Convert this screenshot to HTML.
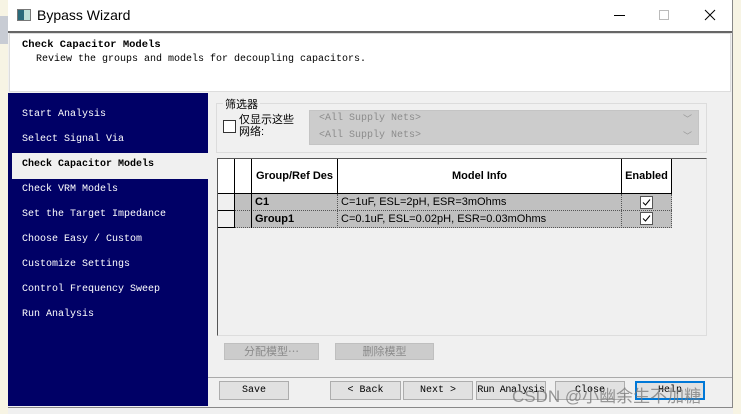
<!DOCTYPE html>
<html><head><style>
*{margin:0;padding:0;box-sizing:border-box}
body{width:741px;height:414px;overflow:hidden;background:#f0f0f0;position:relative;font-family:"Liberation Sans","Noto Sans CJK SC",sans-serif}
.a{position:absolute;white-space:nowrap}
.mono{font-family:"Liberation Mono","Noto Sans CJK SC",monospace;font-size:10px}
.nav div{position:absolute;left:14px;color:#fff;white-space:nowrap}
.btn{position:absolute;border:1px solid #adadad;background:#e1e1e1;text-align:center;font-family:"Liberation Mono",monospace;font-size:10px;line-height:17px;color:#000;white-space:nowrap;overflow:hidden}
.dis{background:#ccc;border-color:#bfbfbf;color:#8a8a8a;font-family:"Noto Sans CJK SC",sans-serif;font-size:11px}
.cell{position:absolute;border-right:1px solid #000;border-bottom:1px solid #000}
</style></head><body>
<div class="a" style="left:0;top:0;width:8px;height:414px;background:#f7f4e4"></div>
<div class="a" style="left:0;top:16px;width:8px;height:28px;background:#c8ccd4"></div>
<div class="a" style="left:733px;top:0;width:8px;height:414px;background:#f7f4e4"></div>
<div class="a" style="left:8px;top:0;width:725px;height:408px;background:#f0f0f0;border-right:1px solid #888;border-bottom:1px solid #888"></div>
<div class="a" style="left:8px;top:0;width:724px;height:31px;background:#fff"></div>
<div class="a" style="left:17px;top:9px;width:14px;height:12px;border:1px solid #777;background:linear-gradient(90deg,#2a6a7a 0 50%,#bfe0d8 50%)"></div>
<div class="a" style="left:37px;top:7px;font-size:14px;color:#000">Bypass Wizard</div>
<div class="a" style="left:614px;top:15px;width:11px;height:1px;background:#000"></div>
<div class="a" style="left:659px;top:10px;width:10px;height:10px;border:1px solid #bbb"></div>
<svg class="a" style="left:704px;top:9px" width="12" height="12"><path d="M1 1L11 11M11 1L1 11" stroke="#000" stroke-width="1"/></svg>
<div class="a" style="left:8px;top:31px;width:724px;height:2px;background:#666"></div>
<div class="a" style="left:9px;top:33px;width:722px;height:59px;background:#fff;border:1px solid #ddd"></div>
<div class="a mono" style="left:22px;top:39px;font-weight:bold;font-size:10.5px">Check Capacitor Models</div>
<div class="a mono" style="left:36px;top:54px;font-size:10px">Review the groups and models for decoupling capacitors.</div>
<div class="a nav mono" style="left:8px;top:93px;width:200px;height:313px;background:#000066">
<div style="top:16px">Start Analysis</div>
<div style="top:41px">Select Signal Via</div>
<div style="left:4px;top:60px;width:196px;height:26px;background:#f0f0f0"></div>
<div style="top:66px;color:#000;font-weight:bold">Check Capacitor Models</div>
<div style="top:91px">Check VRM Models</div>
<div style="top:116px">Set the Target Impedance</div>
<div style="top:141px">Choose Easy / Custom</div>
<div style="top:166px">Customize Settings</div>
<div style="top:191px">Control Frequency Sweep</div>
<div style="top:216px">Run Analysis</div>
</div>
<div class="a" style="left:216px;top:103px;width:491px;height:50px;border:1px solid #dcdcdc"></div>
<div class="a" style="left:223px;top:96px;font-size:11px;background:#f0f0f0;padding:0 2px">筛选器</div>
<div class="a" style="left:223px;top:120px;width:13px;height:13px;border:1px solid #333;background:#fff"></div>
<div class="a" style="left:239px;top:114px;font-size:11px;line-height:12px">仅显示这些<br>网络:</div>
<div class="a" style="left:309px;top:110px;width:390px;height:35px;background:#ccc;border:1px solid #c4c4c4"></div>
<div class="a mono" style="left:319px;top:113px;color:#8c8c8c">&lt;All Supply Nets&gt;</div>
<div class="a mono" style="left:319px;top:130px;color:#8c8c8c">&lt;All Supply Nets&gt;</div>
<div class="a" style="left:683px;top:112px;color:#999;font-size:9px">﹀</div>
<div class="a" style="left:683px;top:129px;color:#999;font-size:9px">﹀</div>
<div class="a" style="left:217px;top:158px;width:490px;height:178px;background:#f0f0f0;border:1px solid #555;border-right-color:#ddd;border-bottom-color:#ddd"></div>
<div class="a" style="left:218px;top:159px;width:453px;height:35px;background:#fff"></div>
<div class="cell" style="left:218px;top:159px;width:17px;height:35px"></div>
<div class="cell" style="left:235px;top:159px;width:17px;height:35px"></div>
<div class="cell" style="left:252px;top:159px;width:86px;height:35px;font-weight:bold;font-size:11px;line-height:34px;padding-left:4px">Group/Ref Des</div>
<div class="cell" style="left:338px;top:159px;width:284px;height:35px;font-weight:bold;font-size:11px;line-height:34px;text-align:center">Model Info</div>
<div class="cell" style="left:622px;top:159px;width:50px;height:35px;font-weight:bold;font-size:11px;line-height:34px;text-align:center">Enabled</div>
<div class="cell" style="left:218px;top:194px;width:17px;height:17px;background:#f0f0f0"></div>
<div class="cell" style="left:218px;top:211px;width:17px;height:17px;background:#f0f0f0"></div>
<div class="a" style="left:235px;top:194px;width:437px;height:34px;background:#c0c0c0;border-bottom:1px dotted #555;border-right:1px dotted #555"></div>
<div class="a" style="left:235px;top:210px;width:437px;height:1px;border-top:1px dotted #555"></div>
<div class="a" style="left:251px;top:194px;width:1px;height:34px;background:#000"></div>
<div class="a" style="left:337px;top:194px;height:34px;border-left:1px dotted #555"></div>
<div class="a" style="left:621px;top:194px;height:34px;border-left:1px dotted #555"></div>
<div class="a" style="left:255px;top:196px;font-weight:bold;font-size:11px">C1</div>
<div class="a" style="left:255px;top:213px;font-weight:bold;font-size:11px">Group1</div>
<div class="a" style="left:341px;top:196px;font-size:11px">C=1uF, ESL=2pH, ESR=3mOhms</div>
<div class="a" style="left:341px;top:213px;font-size:11px">C=0.1uF, ESL=0.02pH, ESR=0.03mOhms</div>
<svg class="a" style="left:640px;top:196px" width="13" height="30"><rect x="0.5" y="0.5" width="12" height="12" fill="#fff" stroke="#555"/><path d="M3 6.5L5.5 9L10 3.5" fill="none" stroke="#000"/><rect x="0.5" y="16.5" width="12" height="12" fill="#fff" stroke="#555"/><path d="M3 22.5L5.5 25L10 19.5" fill="none" stroke="#000"/></svg>
<div class="btn dis" style="left:224px;top:343px;width:95px;height:17px;line-height:15px">分配模型…</div>
<div class="btn dis" style="left:335px;top:343px;width:99px;height:17px;line-height:15px">删除模型</div>
<div class="a" style="left:208px;top:377px;width:524px;height:1px;background:#aaa"></div>
<div class="btn" style="left:219px;top:381px;width:70px;height:19px">Save</div>
<div class="btn" style="left:330px;top:381px;width:71px;height:19px">&lt; Back</div>
<div class="btn" style="left:403px;top:381px;width:70px;height:19px">Next &gt;</div>
<div class="btn" style="left:476px;top:381px;width:70px;height:19px;letter-spacing:-0.4px">Run Analysis</div>
<div class="btn" style="left:555px;top:381px;width:70px;height:19px">Close</div>
<div class="btn" style="left:635px;top:381px;width:70px;height:19px;border:2px solid #0078d7;line-height:15px">Help</div>
<div class="a" style="left:512px;top:382px;font-size:17px;color:rgba(120,120,120,0.75)">CSDN @小幽余生不加糖</div>
</body></html>
